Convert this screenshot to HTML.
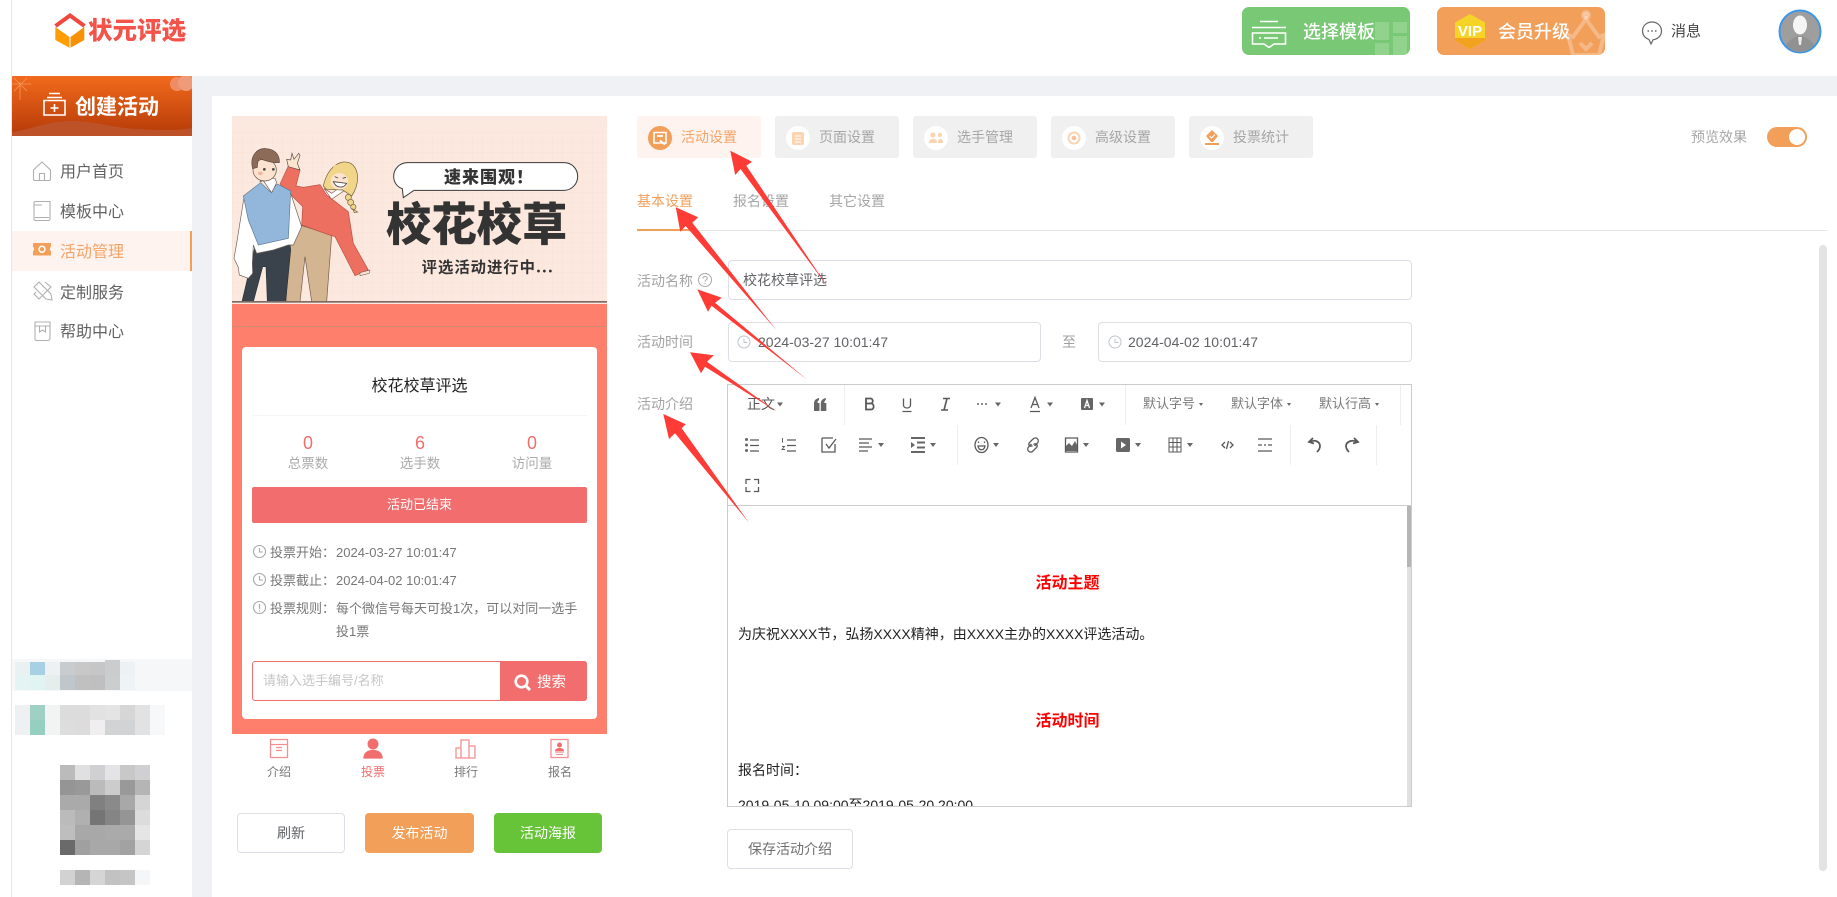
<!DOCTYPE html>
<html lang="zh-CN"><head><meta charset="utf-8"><title>状元评选</title>
<style>
*{box-sizing:border-box;margin:0;padding:0}
html,body{width:1837px;height:897px;overflow:hidden;background:#fff}
body{position:relative;font-family:"Liberation Sans","Noto Sans CJK SC",sans-serif;color:#666}
.a{position:absolute;white-space:nowrap}
.b{position:absolute}
.m{font-size:16px;line-height:20px;left:60px;color:#626262}
.tb{font-size:14px;line-height:20px;color:#a6a6a6}
.tab{position:absolute;top:116px;width:124px;height:42px;background:#f0f0f0;border-radius:3px}
.lab{font-size:14px;line-height:20px;left:637px;color:#a3a3a3}
.ip{position:absolute;border:1px solid #dcdfe6;border-radius:4px;background:#fff}
.tl{font-size:13px;line-height:20px;color:#777}
.sz{font-size:13px;line-height:20px;color:#7a7a7a}
.btn{position:absolute;top:813px;height:40px;border-radius:4px;text-align:center;line-height:38px;font-size:14px;color:#fff}
.bl{font-size:12px;line-height:16px;color:#777;transform:translateX(-50%)}
.st{font-size:13.5px;line-height:18px;color:#aaa;transform:translateX(-50%)}
.nu{font-size:18px;line-height:22px;color:#f26e6e;transform:translateX(-50%)}
.p{position:absolute;width:15px;height:15px}
</style></head><body>

<!-- page frame -->
<div class="b" style="left:11px;top:0;width:1px;height:897px;background:#e8e8e8"></div>
<div class="b" style="left:12px;top:76px;width:1825px;height:821px;background:#f0f1f5"></div>
<div class="b" style="left:12px;top:76px;width:180px;height:821px;background:#fff"></div>
<div class="b" style="left:212px;top:96px;width:1625px;height:801px;background:#fff"></div>

<!-- header -->
<svg class="b" style="left:50px;top:10px" width="40" height="42" viewBox="50 10 40 42">
<path d="M55.300 27L69.500 37V47.700L55.300 40Z" fill="#ff9d05"/>
<path d="M70.500 37L84.300 27V40L70.500 47.700Z" fill="#f79108"/>
<path d="M55.500 26L70 15.500L84.500 26" fill="none" stroke="#f0483e" stroke-width="4"/>
</svg>
<div class="a" style="left:88px;top:16px;font-size:24.500px;line-height:32px;font-weight:900;color:#f4534a">状元评选</div>

<div class="b" style="left:1242px;top:7px;width:168px;height:48px;background:#79c875;border-radius:7px;overflow:hidden">
<i class="b" style="left:133px;top:15px;width:14px;height:18px;background:rgba(255,255,255,.18)"></i>
<i class="b" style="left:151px;top:15px;width:14px;height:11px;background:rgba(255,255,255,.18)"></i>
<i class="b" style="left:133px;top:36px;width:14px;height:12px;background:rgba(255,255,255,.18)"></i>
<i class="b" style="left:151px;top:29px;width:14px;height:19px;background:rgba(255,255,255,.18)"></i>
</div>
<svg class="b" style="left:1250px;top:18px" width="38" height="30" viewBox="0 0 38 30" fill="none" stroke="#fff" stroke-width="1.6">
<path d="M10 3.500H28M2 9.500H36M2.500 15H35.500V26H24L19 29.500L14 26H2.500ZM9 20H11M14 20H28"/></svg>
<div class="a" style="left:1303px;top:19px;font-size:18px;line-height:26px;font-weight:500;color:#fff">选择模板</div>

<div class="b" style="left:1437px;top:7px;width:168px;height:48px;background:#f29f5a;border-radius:7px;overflow:hidden"></div>
<svg class="b" style="left:1565px;top:7px" width="40" height="48" viewBox="0 0 40 48" fill="none" stroke="#fff" stroke-opacity=".28" stroke-width="4">
<circle cx="21" cy="8" r="3" fill="#fff" fill-opacity=".28"/><path d="M21 12L8 30L3 28L8 48H34L39 28L34 30ZM15 36L21 42L27 36"/></svg>
<svg class="b" style="left:1453px;top:13px" width="34" height="37" viewBox="0 0 34 37">
<path d="M17 1L32 9.500V27.500L17 36L2 27.500V9.500Z" fill="#f5d327"/>
<path d="M2 25L32 25V27.500L17 36L2 27.500Z" fill="#f3a21f"/>
<text x="17" y="23" text-anchor="middle" font-family="Liberation Sans" font-weight="700" font-size="15" fill="#fff">VIP</text></svg>
<div class="a" style="left:1498px;top:19px;font-size:18px;line-height:26px;font-weight:500;color:#fff">会员升级</div>

<svg class="b" style="left:1641px;top:15px" width="22" height="32" viewBox="0 0 22 32" fill="none" stroke="#666" stroke-width="1.2">
<path d="M11 7C5.500 7 1.500 11 1.500 16C1.500 20 4 23 8 24.500L10 29L12 24.800C17 24 20.500 20.500 20.500 16C20.500 11 16.500 7 11 7Z"/>
<path d="M6.500 16H8M10.300 16H11.800M14 16H15.500" stroke-width="1.500"/></svg>
<div class="a" style="left:1671px;top:22px;font-size:15px;line-height:20px;color:#444">消息</div>

<svg class="b" style="left:1778px;top:9px" width="44" height="46" viewBox="0 0 44 46">
<ellipse cx="22" cy="22.500" rx="20.500" ry="21" fill="#9e9e9e" stroke="#3e97e6" stroke-width="2"/>
<ellipse cx="22" cy="16" rx="7" ry="9.500" fill="#f5f5f5"/>
<path d="M8 36C11 30 17 29 19 27H25C27 29 33 30 36 36C32 41 27 43 22 43C17 43 12 41 8 36Z" fill="#919191"/>
<path d="M20 28H24L23 36H21Z" fill="#eee"/>
</svg>

<!-- sidebar -->
<svg class="b" style="left:12px;top:76px" width="180" height="60" viewBox="0 0 180 60">
<defs><linearGradient id="g" x1="0" y1="0" x2="0" y2="1"><stop offset="0" stop-color="#f26a1c"/><stop offset="1" stop-color="#b53a08"/></linearGradient></defs>
<rect width="180" height="60" rx="1" fill="url(#g)"/>
<path d="M0 56C25 52 35 45 60 45C85 45 100 52 125 53C150 54 165 55 180 52V60H0Z" fill="#bd5128"/>
<circle cx="165" cy="8" r="7" fill="#ef8c66"/><circle cx="174" cy="7" r="8" fill="#ef9a78"/>
<g stroke="#f7a874" stroke-width=".8" opacity=".75"><path d="M8 6V24M0 8H19M2 2L15 15M15 2L2 15"/></g>
<g fill="none" stroke="#fff" stroke-width="1.600"><path d="M32 24.500H53V39H32ZM37 17.500H48M35 21.500H50"/><path d="M42.500 28V36M38.500 32H46.500"/></g>
</svg>
<div class="a" style="left:75px;top:93px;font-size:21px;line-height:30px;font-weight:700;color:#fff">创建活动</div>

<div class="b" style="left:12px;top:231px;width:180px;height:40px;background:#fef3ee;border-right:2px solid #f29f5a"></div>
<svg class="b" style="left:31px;top:160px" width="24" height="190" viewBox="0 0 24 190" fill="none" stroke="#b0b0b0" stroke-width="1.100">
<path d="M2.500 10L11 2L19.500 10V19C19.500 20 19 20.500 18 20.500H4C3 20.500 2.500 20 2.500 19ZM8.500 20.500V13.500H13.500V20.500"/>
<path d="M3 43C3 42 3.500 41.500 4.500 41.500H19V59C19 60 18.500 60.500 17.500 60.500H4.500C3.500 60.500 3 60 3 59ZM3 45H11M4 57.500H18"/>
<path fill="#f29f5a" stroke="none" d="M2 83H20V87C18.500 87 18.500 91 20 91V95.500H2V91C3.500 91 3.500 87 2 87Z"/>
<circle cx="11" cy="89.200" r="3" fill="none" stroke="#fff" stroke-width="1.500"/>
<path d="M3 127L8 122L20 134L21 140L15 139ZM14 122L20 127L8 139L3 134L5 132"/>
<path d="M4 162H19V178C19 179.500 18 180.500 16.500 180.500H5.500C4.500 180.500 4 180 4 179ZM4 166H19M8.500 166V172L11.500 170L14.500 172V166"/>
</svg>
<div class="a m" style="top:163px">用户首页</div>
<div class="a m" style="top:203px">模板中心</div>
<div class="a m" style="top:243px;color:#f4a468">活动管理</div>
<div class="a m" style="top:284px">定制服务</div>
<div class="a m" style="top:323px">帮助中心</div>

<!-- blurred mosaic -->
<div class="b" style="left:12px;top:659px;width:180px;height:32px;background:#f6f7f9"></div>
<i class="p" style="left:15px;top:662px;background:#eaf1f3"></i><i class="p" style="left:30px;top:662px;background:#a8d0e3"></i><i class="p" style="left:45px;top:662px;background:#eef1f3"></i><i class="p" style="left:60px;top:662px;background:#c9ccce"></i><i class="p" style="left:75px;top:662px;background:#c8c8c8"></i><i class="p" style="left:90px;top:662px;background:#c6c6c6"></i><i class="p" style="left:105px;top:660px;height:17px;background:#cbcccd"></i><i class="p" style="left:120px;top:662px;background:#edf1f4"></i>
<i class="p" style="left:15px;top:675px;background:#e4f3f3"></i><i class="p" style="left:30px;top:675px;background:#e0f4f4"></i><i class="p" style="left:45px;top:675px;background:#e5eeec"></i><i class="p" style="left:60px;top:675px;background:#bfc7cc"></i><i class="p" style="left:75px;top:675px;background:#c0c0c0"></i><i class="p" style="left:90px;top:675px;background:#bfbfbf"></i><i class="p" style="left:105px;top:675px;background:#cbcecf"></i><i class="p" style="left:120px;top:675px;background:#eef3f6"></i>
<i class="p" style="left:15px;top:705px;background:#eef0f1"></i><i class="p" style="left:30px;top:705px;background:#9fd0c3"></i><i class="p" style="left:45px;top:705px;background:#f2f4f3"></i><i class="p" style="left:60px;top:705px;background:#dcdcdc"></i><i class="p" style="left:75px;top:705px;background:#dcdcdc"></i><i class="p" style="left:90px;top:705px;background:#e2e2e2"></i><i class="p" style="left:105px;top:705px;background:#e4e4e4"></i><i class="p" style="left:120px;top:705px;background:#d6d6d6"></i><i class="p" style="left:135px;top:705px;background:#e2e2e2"></i><i class="p" style="left:150px;top:705px;background:#f7f8f9"></i>
<i class="p" style="left:15px;top:720px;background:#eef0f1"></i><i class="p" style="left:30px;top:720px;background:#96cfc0"></i><i class="p" style="left:45px;top:720px;background:#f2f4f3"></i><i class="p" style="left:60px;top:720px;background:#ddd"></i><i class="p" style="left:75px;top:720px;background:#dcdcdc"></i><i class="p" style="left:90px;top:720px;background:#f0eeee"></i><i class="p" style="left:105px;top:720px;background:#d2d3d5"></i><i class="p" style="left:120px;top:720px;background:#d2d3d5"></i><i class="p" style="left:135px;top:720px;background:#e2e2e2"></i><i class="p" style="left:150px;top:720px;background:#f7f8f9"></i>
<svg class="b" style="left:60px;top:765px" width="90" height="120" viewBox="0 0 6 8" shape-rendering="crispEdges">
<rect x="0" y="0" width="1" height="1" fill="#bbb"/><rect x="1" y="0" width="1" height="1" fill="#e0e0e0"/><rect x="2" y="0" width="1" height="1" fill="#d0d0d2"/><rect x="3" y="0" width="1" height="1" fill="#e4e4e6"/><rect x="4" y="0" width="1" height="1" fill="#c8c8c8"/><rect x="5" y="0" width="1" height="1" fill="#d0d0d2"/>
<rect x="0" y="1" width="1" height="1" fill="#959595"/><rect x="1" y="1" width="1" height="1" fill="#999"/><rect x="2" y="1" width="1" height="1" fill="#bbb"/><rect x="3" y="1" width="1" height="1" fill="#ccc"/><rect x="4" y="1" width="1" height="1" fill="#999"/><rect x="5" y="1" width="1" height="1" fill="#b5b5b5"/>
<rect x="0" y="2" width="1" height="1" fill="#aaa"/><rect x="1" y="2" width="1" height="1" fill="#aaa"/><rect x="2" y="2" width="1" height="1" fill="#808080"/><rect x="3" y="2" width="1" height="1" fill="#8a8a8a"/><rect x="4" y="2" width="1" height="1" fill="#a8a8a8"/><rect x="5" y="2" width="1" height="1" fill="#d5d5d5"/>
<rect x="0" y="3" width="1" height="1" fill="#bbb"/><rect x="1" y="3" width="1" height="1" fill="#b0b0b0"/><rect x="2" y="3" width="1" height="1" fill="#757575"/><rect x="3" y="3" width="1" height="1" fill="#858585"/><rect x="4" y="3" width="1" height="1" fill="#959595"/><rect x="5" y="3" width="1" height="1" fill="#dcdcdc"/>
<rect x="0" y="4" width="1" height="1" fill="#bebebe"/><rect x="1" y="4" width="1" height="1" fill="#a8a8a8"/><rect x="2" y="4" width="1" height="1" fill="#a8a8a8"/><rect x="3" y="4" width="1" height="1" fill="#aaa"/><rect x="4" y="4" width="1" height="1" fill="#aaa"/><rect x="5" y="4" width="1" height="1" fill="#e5e5e5"/>
<rect x="0" y="5" width="1" height="1" fill="#6a6a6a"/><rect x="1" y="5" width="1" height="1" fill="#a0a0a0"/><rect x="2" y="5" width="1" height="1" fill="#a8a8a8"/><rect x="3" y="5" width="1" height="1" fill="#a8a8a8"/><rect x="4" y="5" width="1" height="1" fill="#a2a2a2"/><rect x="5" y="5" width="1" height="1" fill="#d5d5d5"/>
<rect x="0" y="7" width="1" height="1" fill="#d2d2d2"/><rect x="1" y="7" width="1" height="1" fill="#b5b5b5"/><rect x="2" y="7" width="1" height="1" fill="#d5d5d5"/><rect x="3" y="7" width="1" height="1" fill="#c2c2c2"/><rect x="4" y="7" width="1" height="1" fill="#c5c5c5"/><rect x="5" y="7" width="1" height="1" fill="#f5f6f8"/>
</svg>

<!-- phone preview -->
<div class="b" style="left:232px;top:302px;width:375px;height:432px;background:#ff7f6d"></div>
<div class="b" style="left:232px;top:326px;width:375px;height:1px;background:#d08a70"></div>
<svg class="b" style="left:232px;top:116px" width="375" height="188" viewBox="36 18 1125 564">
<defs><pattern id="gr" x="36" y="66" width="30" height="30" patternUnits="userSpaceOnUse"><path d="M30 0H0V30" fill="none" stroke="#fbdccc" stroke-width="3"/></pattern></defs>
<rect x="36" y="18" width="1125" height="564" fill="#fbe9df"/>
<rect x="36" y="66" width="1125" height="510" fill="url(#gr)" opacity=".6"/>
<!-- girl -->
<path d="M240 345L335 375L320 575H275L255 440L240 575H198L205 410Z" fill="#d3b591" stroke="#6d5a4c" stroke-width="2"/>
<path d="M180 222L205 168L240 180L228 228L250 232L300 224L320 255L385 305L400 400L445 480L405 497L345 380L320 372L245 345L248 290Z" fill="#ec6f60" stroke="#b85346" stroke-width="2"/>
<path d="M205 170L200 148L212 150L216 130L222 148L236 130L240 136L232 160L240 180Z" fill="#fbe3d0" stroke="#5d4a42" stroke-width="2"/>
<path d="M312 235L335 268L375 240L360 232L335 250Z" fill="#fff" stroke="#8a5a4e" stroke-width="2"/>
<path d="M420 488L450 480L448 490L420 497Z" fill="#fbe3d0" stroke="#5d4a42" stroke-width="1.500"/>
<path d="M310 228C322 172 362 145 392 160C420 178 418 225 395 258L368 240L320 238Z" fill="#f1d689" stroke="#6f5c3a" stroke-width="2"/>
<g fill="#f1d689" stroke="#6f5c3a" stroke-width="2"><circle cx="385" cy="262" r="9"/><circle cx="392" cy="277" r="9"/><circle cx="400" cy="291" r="8"/><path d="M398 297L413 306L403 308Z"/></g>
<ellipse cx="358" cy="214" rx="26" ry="25" fill="#fbe3d0"/>
<path d="M340 215C348 234 370 237 380 220Z" fill="#fff" stroke="#444" stroke-width="2.500"/>
<path d="M344 200L354 204M368 205L378 202" stroke="#444" stroke-width="2.500"/>
<path d="M332 190C345 168 372 172 386 200L398 178L372 160L342 166Z" fill="#f1d689"/>
<!-- boy -->
<path d="M105 410L208 385L212 420L197 575H142L138 470L128 470L100 575H66Z" fill="#3a434c" stroke="#2b3239" stroke-width="2"/>
<path d="M72 262L50 400L42 445L55 472L58 495L85 505L98 490L97 460L100 405L110 430L160 420L205 405L220 405L245 350L212 250Z" fill="#fff" stroke="#6e5f58" stroke-width="2"/>
<path d="M70 258L122 218L150 245L172 222L212 243L205 385L115 405L85 330Z" fill="#93b7da" stroke="#5e7a96" stroke-width="2"/>
<path d="M120 215L130 212L155 248L170 218L165 205L125 205Z" fill="#fff" stroke="#6e5f58" stroke-width="2"/>
<ellipse cx="134" cy="180" rx="35" ry="33" fill="#fbe3d0" stroke="#5d4a42" stroke-width="2"/>
<path d="M98 176C88 140 110 112 140 116C165 118 180 135 178 158L166 158C150 158 130 150 118 146C112 155 112 165 112 172Z" fill="#8c6c58" stroke="#5d4a42" stroke-width="2"/>
<circle cx="133" cy="178" r="4" fill="#444"/><circle cx="160" cy="178" r="4" fill="#444"/>
<ellipse cx="121" cy="190" rx="7" ry="5" fill="#f5b5a0"/>
<!-- bubble -->
<path d="M563 158H1032C1055 158 1073 176 1073 199C1073 222 1055 241 1032 241H582L550 263L547 236C531 231 521 216 521 199C521 176 540 158 563 158Z" fill="#fff" stroke="#3a3a3a" stroke-width="3"/>
<text x="672" y="219" font-family="Noto Sans CJK SC" font-weight="900" font-size="51" letter-spacing="3" fill="#333">速来围观！</text>
<text x="498" y="392" font-family="Noto Sans CJK SC" font-weight="900" font-size="136" fill="#333">校花校草</text>
<text x="605" y="487" font-family="Noto Sans CJK SC" font-weight="700" font-size="46" letter-spacing="3" fill="#333">评选活动进行中...</text>
<rect x="36" y="573" width="1125" height="5" fill="#7d6a64"/>
</svg>

<!-- white card -->
<div class="b" style="left:242px;top:347px;width:355px;height:372px;background:#fff;border-radius:4px"></div>
<div class="a" style="left:242px;width:355px;top:377px;text-align:center;font-size:16px;line-height:20px;color:#222">校花校草评选</div>
<div class="b" style="left:252px;top:415px;width:335px;height:1px;background:#f5f5f5"></div>
<div class="a nu" style="left:308px;top:432px">0</div><div class="a nu" style="left:420px;top:432px">6</div><div class="a nu" style="left:532px;top:432px">0</div>
<div class="a st" style="left:308px;top:455px">总票数</div><div class="a st" style="left:420px;top:455px">选手数</div><div class="a st" style="left:532px;top:455px">访问量</div>
<div class="b" style="left:252px;top:487px;width:335px;height:36px;background:#f26e6e;border-radius:2px;color:#fff;font-size:13px;line-height:36px;text-align:center">活动已结束</div>
<svg class="b" style="left:252px;top:544px" width="16" height="80" viewBox="0 0 16 80" fill="none" stroke="#a8a8a8" stroke-width="1.100">
<circle cx="7.500" cy="7.500" r="6"/><path d="M7.500 4V8H11"/>
<circle cx="7.500" cy="35.500" r="6"/><path d="M7.500 32V36H11"/>
<circle cx="7.500" cy="63.500" r="6"/><path d="M7.500 60V65M7.500 66.300V67.500"/></svg>
<div class="a tl" style="left:270px;top:543px">投票开始：</div><div class="a tl" style="left:336px;top:543px">2024-03-27 10:01:47</div>
<div class="a tl" style="left:270px;top:571px">投票截止：</div><div class="a tl" style="left:336px;top:571px">2024-04-02 10:01:47</div>
<div class="a tl" style="left:270px;top:599px">投票规则：</div><div class="a tl" style="left:336px;top:599px">每个微信号每天可投1次，可以对同一选手</div>
<div class="a tl" style="left:336px;top:622px">投1票</div>
<div class="b" style="left:252px;top:661px;width:335px;height:40px;border:1px solid #f26e6e;border-radius:3px"></div>
<div class="b" style="left:500px;top:661px;width:87px;height:40px;background:#f26e6e;border-radius:0 3px 3px 0"></div>
<div class="a" style="left:263px;top:671px;font-size:13px;line-height:20px;color:#c6c6c6">请输入选手编号/名称</div>
<svg class="b" style="left:514px;top:674px" width="18" height="18" viewBox="0 0 18 18" fill="none" stroke="#fff"><circle cx="7.500" cy="7.500" r="5.800" stroke-width="2.600"/><path d="M12 12L16 16" stroke-width="3"/></svg>
<div class="a" style="left:537px;top:673px;font-size:14.500px;line-height:20px;color:#fff">搜索</div>

<!-- phone bottom nav -->
<svg class="b" style="left:265px;top:737px" width="310" height="24" viewBox="0 0 310 24" fill="none" stroke="#f58e8e" stroke-width="1.300">
<path d="M5.500 2.500H22.500V20.500H5.500ZM5.500 7.500H22.500M11 10.500H17M11 13.500H17"/>
<circle cx="108" cy="7" r="5.500" fill="#f26e6e" stroke="none"/><path d="M99 21C99 16 103 13.500 108 13.500C113 13.500 117 16 117 21Z" fill="#f26e6e" stroke="#f26e6e"/>
<path d="M191 21V11H196V21ZM196 21V3H204V21ZM204 21V9H210V21ZM191 21H210"/>
<path d="M286 2.500H303V20.500H286ZM290 15H299"/>
<circle cx="294.500" cy="8" r="2.500" fill="#f26e6e" stroke="none"/><path d="M290 14C290 12 292 11 294.500 11C297 11 299 12 299 14Z" fill="#f26e6e" stroke="none"/><path d="M291 17.500H298" stroke-width="1"/>
</svg>
<div class="a bl" style="left:279px;top:764px">介绍</div>
<div class="a bl" style="left:373px;top:764px;color:#f26e6e">投票</div>
<div class="a bl" style="left:466px;top:764px">排行</div>
<div class="a bl" style="left:560px;top:764px">报名</div>
<div class="btn" style="left:237px;width:108px;border:1px solid #dcdfe6;color:#606266">刷新</div>
<div class="btn" style="left:365px;width:109px;background:#f29f5a;line-height:40px">发布活动</div>
<div class="btn" style="left:494px;width:108px;background:#67c337;line-height:40px">活动海报</div>

<!-- top tabs -->
<div class="tab" style="left:637px;background:#fef3ee"></div><div class="tab" style="left:775px"></div><div class="tab" style="left:913px"></div><div class="tab" style="left:1051px"></div><div class="tab" style="left:1189px"></div>
<svg class="b" style="left:637px;top:116px" width="680" height="42" viewBox="0 0 680 42">
<circle cx="23" cy="22" r="12" fill="#f29f5a"/><path d="M17 16.500H29V27H17Z" fill="none" stroke="#fff" stroke-width="1.600"/><path d="M20 20H26M23 24.500L28 28.500" stroke="#fff" stroke-width="1.800"/>
<circle cx="161" cy="22" r="12" fill="#fff"/><rect x="155" y="16" width="12" height="13" rx="2" fill="#fbd4b2"/><path d="M158 20H164M158 23H164M158 26H164" stroke="#fff" stroke-width="1"/>
<circle cx="299" cy="22" r="12" fill="#fff"/><circle cx="296" cy="19" r="2.600" fill="#fbd4b2"/><circle cx="303" cy="19" r="2.200" fill="#fbd4b2"/><path d="M292 27C292 24 294 23 296 23C299 23 300 24 300 27ZM301 27C301 24 302 23 303.500 23C305 23 306 24 306 27Z" fill="#fbd4b2"/>
<circle cx="437" cy="22" r="12" fill="#fff"/><circle cx="437" cy="22" r="5.500" fill="none" stroke="#fbd4b2" stroke-width="2"/><circle cx="437" cy="22" r="2.300" fill="#f9bf96"/>
<circle cx="575" cy="22" r="12" fill="#fff"/><path d="M575 14L581 20L576 26H574L569 20Z" fill="#f29f5a"/><path d="M568 28H582" stroke="#f29f5a" stroke-width="2"/><path d="M572.500 20L574.500 22L578 18.500" stroke="#fff" fill="none"/>
</svg>
<div class="a tb" style="left:681px;top:127px;color:#f4a468">活动设置</div>
<div class="a tb" style="left:819px;top:127px">页面设置</div>
<div class="a tb" style="left:957px;top:127px">选手管理</div>
<div class="a tb" style="left:1095px;top:127px">高级设置</div>
<div class="a tb" style="left:1233px;top:127px">投票统计</div>
<div class="a tb" style="left:1691px;top:127px">预览效果</div>
<div class="b" style="left:1767px;top:127px;width:40px;height:20px;background:#f29f5a;border-radius:10px"></div>
<div class="b" style="left:1789px;top:129px;width:16px;height:16px;background:#fff;border-radius:50%"></div>

<!-- sub tabs -->
<div class="a tb" style="left:637px;top:191px;color:#f29f5a">基本设置</div>
<div class="a tb" style="left:733px;top:191px">报名设置</div>
<div class="a tb" style="left:829px;top:191px">其它设置</div>
<div class="b" style="left:637px;top:230px;width:1190px;height:1px;background:#e4e4e4"></div>
<div class="b" style="left:637px;top:229px;width:56px;height:2px;background:#f29f5a"></div>
<div class="b" style="left:1819px;top:245px;width:8px;height:626px;background:#e3e3e3;border-radius:4px"></div>

<!-- form -->
<div class="a lab" style="top:271px">活动名称</div>
<svg class="b" style="left:697px;top:272px" width="16" height="16" viewBox="0 0 16 16" fill="none" stroke="#a8a8a8"><circle cx="8" cy="8" r="6.500"/><path d="M6 6.500C6 5 7 4.500 8 4.500C9.500 4.500 10.300 5.300 10.300 6.300C10.300 7.800 8 7.800 8 9.800M8 11V12"/></svg>
<div class="ip" style="left:728px;top:260px;width:684px;height:40px"></div>
<div class="a" style="left:743px;top:270px;font-size:14px;line-height:20px;color:#606266">校花校草评选</div>
<div class="a lab" style="top:332px">活动时间</div>
<div class="ip" style="left:728px;top:322px;width:313px;height:40px"></div>
<div class="ip" style="left:1098px;top:322px;width:314px;height:40px"></div>
<svg class="b" style="left:737px;top:335px" width="14" height="14" viewBox="0 0 14 14" fill="none" stroke="#c0c4cc"><circle cx="7" cy="7" r="6"/><path d="M7 3.500V7.500H10.500"/></svg>
<svg class="b" style="left:1108px;top:335px" width="14" height="14" viewBox="0 0 14 14" fill="none" stroke="#c0c4cc"><circle cx="7" cy="7" r="6"/><path d="M7 3.500V7.500H10.500"/></svg>
<div class="a" style="left:758px;top:332px;font-size:14px;line-height:20px;color:#606266">2024-03-27 10:01:47</div>
<div class="a" style="left:1062px;top:332px;font-size:14px;line-height:20px;color:#a0a0a0">至</div>
<div class="a" style="left:1128px;top:332px;font-size:14px;line-height:20px;color:#606266">2024-04-02 10:01:47</div>
<div class="a lab" style="top:394px">活动介绍</div>

<!-- editor -->
<div class="b" style="left:727px;top:384px;width:685px;height:423px;border:1px solid #ccc"></div>
<div class="b" style="left:728px;top:505px;width:683px;height:1px;background:#ccc"></div>
<div class="b" style="left:1407px;top:506px;width:4px;height:300px;background:#e0e0e0"></div>
<div class="b" style="left:1407px;top:506px;width:4px;height:61px;background:#b5b5b5"></div>
<div class="a" style="left:747px;top:394px;font-size:14px;line-height:20px;color:#595959">正文</div>
<div class="a sz" style="left:1143px;top:394px">默认字号</div>
<div class="a sz" style="left:1231px;top:394px">默认字体</div>
<div class="a sz" style="left:1319px;top:394px">默认行高</div>
<svg class="b" style="left:728px;top:385px" width="683" height="120" viewBox="728 385 683 120" fill="none" stroke="#595959" stroke-width="1.300">
<g stroke="#eee" stroke-width="1"><path d="M844.500 385V425M1125.500 385V425M1400.500 385V425M957.500 425V465M1290.500 425V465M1376.500 425V465"/></g>
<g fill="#666" stroke="none">
<path d="M777 402.500H783L780 406.500ZM995 402.500H1001L998 406.500ZM1047 402.500H1053L1050 406.500ZM1099 402.500H1105L1102 406.500ZM1199 403H1203L1201 406ZM1287 403H1291L1289 406ZM1375 403H1379L1377 406Z"/>
<path d="M878 443H884L881 447ZM930 443H936L933 447ZM993 443H999L996 447ZM1083 443H1089L1086 447ZM1135 443H1141L1138 447ZM1187 443H1193L1190 447Z"/>
<path d="M814 404C814 401 815 399 819 398V400C818 400.500 817.500 401.500 817.500 403H819.500V411H814ZM820.800 404C820.800 401 821.800 399 825.800 398V400C824.800 400.500 824.300 401.500 824.300 403H826.300V411H820.800Z"/>
<circle cx="978" cy="404" r="1"/><circle cx="982" cy="404" r="1"/><circle cx="986" cy="404" r="1"/>
<rect x="1081" y="398" width="12" height="12" rx="1"/>
<circle cx="746.500" cy="439.500" r="1.500"/><circle cx="746.500" cy="445" r="1.500"/><circle cx="746.500" cy="450.500" r="1.500"/>
<path d="M1117.500 438H1128.500C1129.500 438 1130 438.500 1130 439.500V450.500C1130 451.500 1129.500 452 1128.500 452H1117.500C1116.500 452 1116 451.500 1116 450.500V439.500C1116 438.500 1116.500 438 1117.500 438ZM1121 441.500V448.500L1126 445Z" fill-rule="evenodd"/>
<path d="M1065 447L1069 443L1072 446L1075 441L1077 445V451H1065Z"/>
<path d="M911 437H925V439H911ZM911 451H925V453H911ZM917 441.500H925V443.500H917ZM917 446.500H925V448.500H917ZM911 442V448L915 445Z"/>
</g>
<path d="M866 398.500H870.500C873.500 398.500 873.500 403.500 870.500 403.500H866ZM866 403.500H871C874.500 403.500 874.500 409.500 871 409.500H866Z" stroke-width="1.800"/>
<path d="M903.500 398.500V405C903.500 409 910.500 409 910.500 405V398.500M902.500 411.500H911.500"/>
<path d="M943 398.500H950M941 410H948M947 398.500L944 410" stroke-width="1.600"/>
<path d="M1030 411.500H1040M1031 408L1035 397.500L1039 408M1032.500 404.500H1037.500"/>
<path d="M1084.500 408L1087 400.500L1089.500 408M1085.500 405.500H1088.500" stroke="#fff"/>
<path d="M750 440H759M750 445.500H759M750 451H759"/>
<path d="M787 440H796M787 445.500H796M787 451H796"/>
<path d="M782.500 438V442.500M782 446.500H784.500L782 449.500H785M782 452.500" stroke-width=".9"/>
<path d="M822 438H833M822 438V452H835V444M826 444L829 448L836 439"/>
<path d="M859 439H872M859 443H869M859 447H872M859 451H868"/>
<path d="M975 445a6.500 7.500 0 1 0 13 0a6.500 7.500 0 1 0-13 0M978 446C979 451 984 451 985 446ZM978.500 441.500V443M984.500 441.500V443"/>
<path d="M1031.500 444L1028.500 447C1026 450 1030 454 1033 451L1036.500 447.500C1038.500 445 1035.500 442.500 1033.500 444.500M1034.500 446L1037.500 443C1040 440 1036 436 1033 439L1029.500 442.500C1027.500 445 1030.500 447.500 1032.500 445.500"/>
<path d="M1065.500 438H1077.500V452H1065.500Z"/>
<path d="M1169 438H1181V452H1169ZM1169 442.500H1181M1169 447H1181M1173 438V452M1177 438V452" stroke-width="1"/>
<path d="M1225 442L1222 445L1225 448M1230 442L1233 445L1230 448M1228.500 441L1226.500 449"/>
<path d="M1258 439H1272M1258 451H1272M1258 445H1262M1264 445H1266M1268 445H1272"/>
<path d="M1313 438L1309 442L1314 443.500M1310 442C1315 439 1320 442 1320 446C1320 448.500 1319 450 1317 452" stroke-width="1.800"/>
<path d="M1354 438L1358 442L1353 443.500M1357 442C1352 439 1346 442 1346 446C1346 448.500 1347 450 1349 452" stroke-width="1.800"/>
<path d="M746 484V479.500H750.500M754 479.500H758.500V484M758.500 487V491.500H754M750.500 491.500H746V487"/>
</svg>
<div class="a" style="left:728px;width:679px;top:573px;text-align:center;font-size:16px;line-height:22px;font-weight:700;color:#f00">活动主题</div>
<div class="a" style="left:738px;top:624px;font-size:14px;line-height:20px;color:#222">为庆祝XXXX节，弘扬XXXX精神，由XXXX主办的XXXX评选活动。</div>
<div class="a" style="left:728px;width:679px;top:711px;text-align:center;font-size:16px;line-height:22px;font-weight:700;color:#f00">活动时间</div>
<div class="a" style="left:738px;top:760px;font-size:14px;line-height:20px;color:#222">报名时间：</div>
<div class="b" style="left:728px;top:790px;width:670px;height:16px;overflow:hidden"><div class="a" style="left:10px;top:5px;font-size:14px;line-height:20px;color:#222">2019-05-10 09:00至2019-05-20 20:00</div></div>
<div class="b" style="left:727px;top:829px;width:126px;height:40px;border:1px solid #dcdfe6;border-radius:4px;text-align:center;font-size:14px;line-height:38px;color:#707070">保存活动介绍</div>

<!-- red arrows -->
<svg class="b" style="left:0;top:0" width="1837" height="897" viewBox="0 0 1837 897" fill="#ff3b36">
<path d="M730.300 150.700L752.100 161.700L746.300 165.700L827.600 286.700L740.500 169L735.200 175Z"/>
<path d="M675.800 207.300L698.100 217.300L692.300 222.700L776.300 330L685.600 226L680.300 231.700Z"/>
<path d="M697.200 289.300L721.800 297.700L715 302.700L807.500 380L711.500 305.700L708 311.700Z"/>
<path d="M690 352.300L713.800 355.300L707 361.700L777 411.700L705 366.700L701 373.300Z"/>
<path d="M663.300 414L685.700 424.300L681.700 428.300L749 522.700L675 433.300L669 439Z"/>
</svg>
</body></html>
